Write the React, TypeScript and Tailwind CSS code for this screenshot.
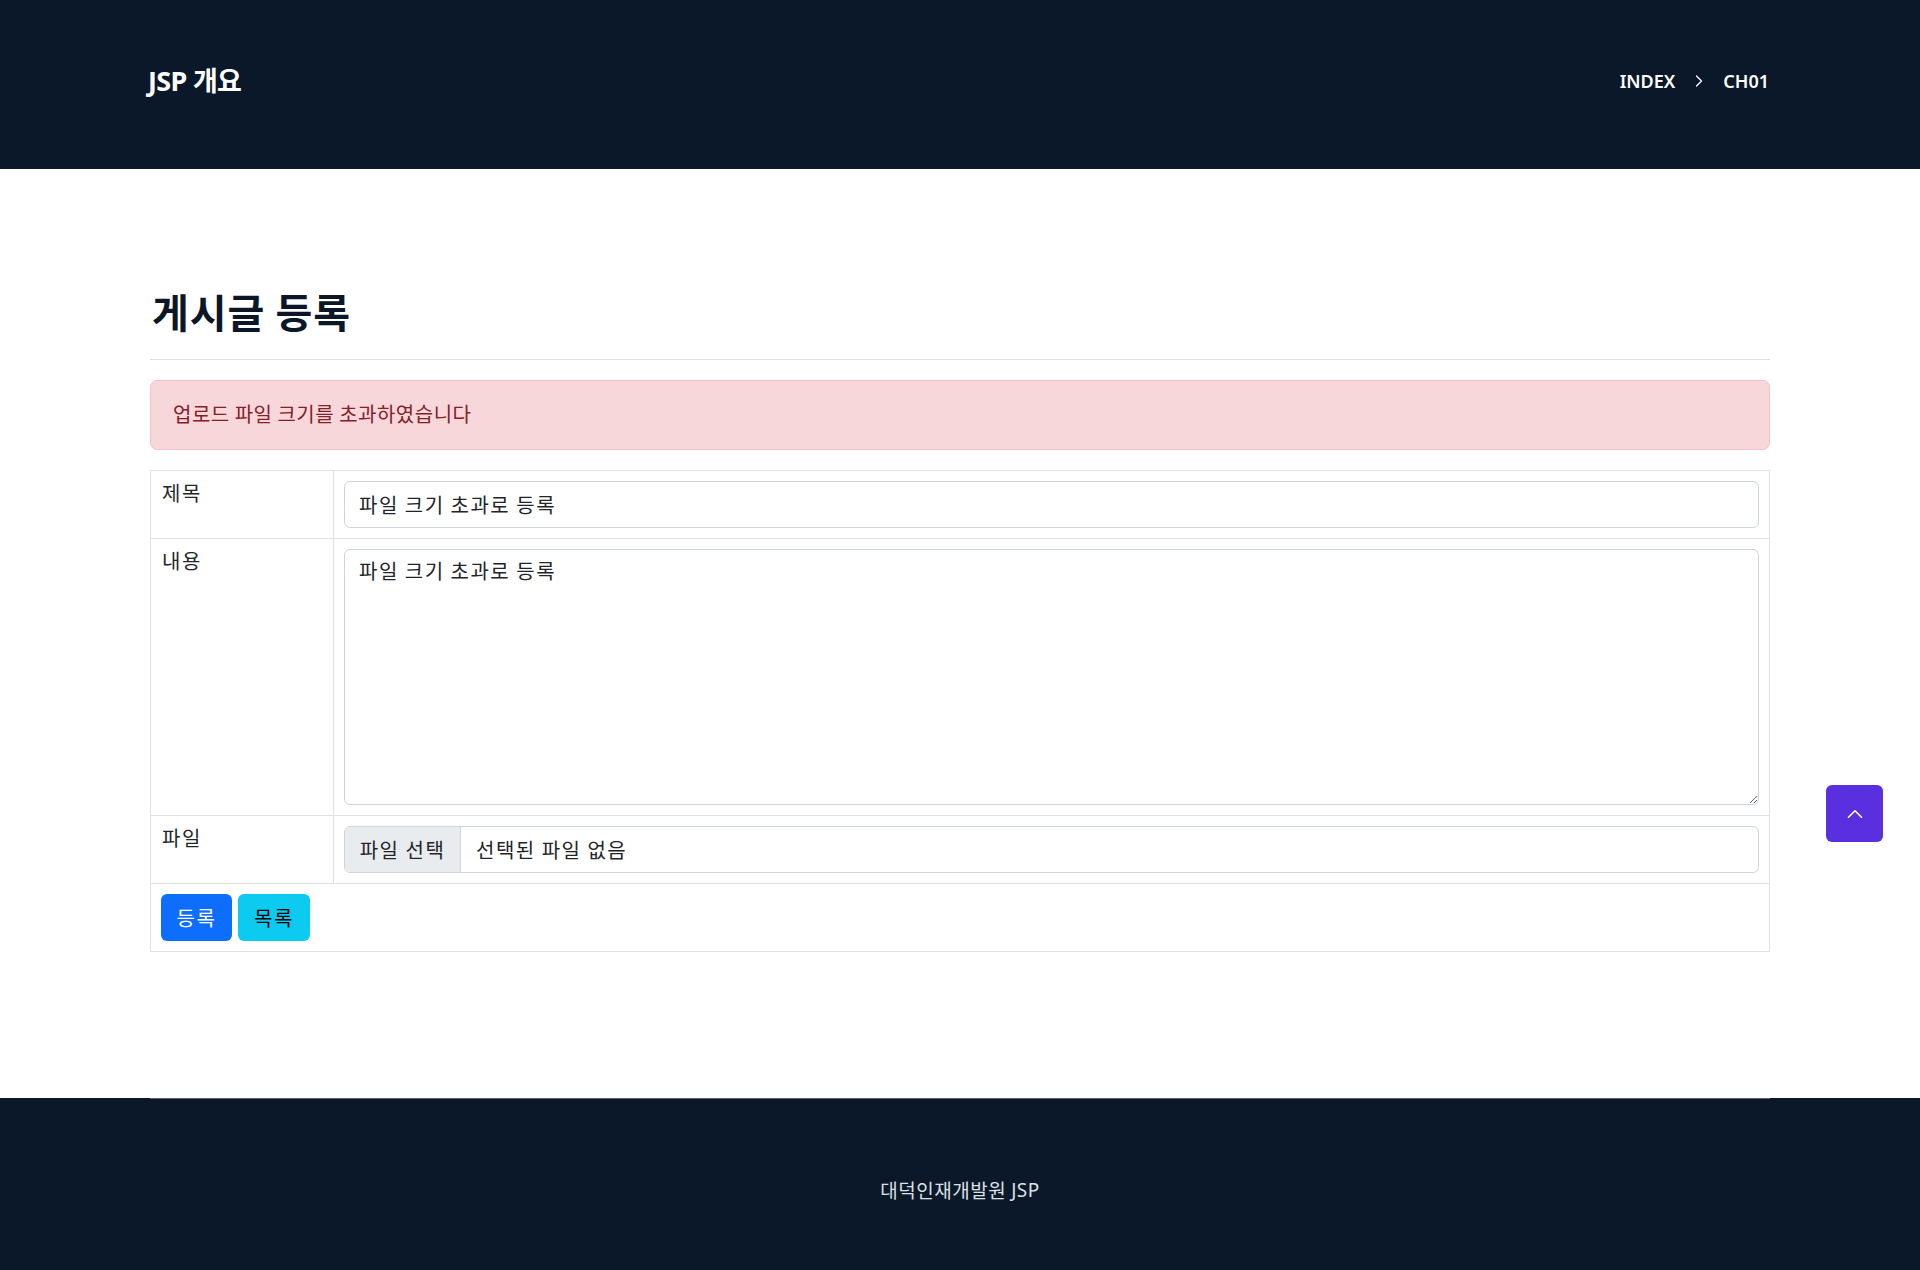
import { ChevronRight, ChevronUp } from "lucide-react";

const kr = { fontFamily: '"Noto Sans CJK KR", "Noto Sans", sans-serif' };
const head = { fontFamily: '"Noto Sans", "Noto Sans CJK KR", sans-serif' };

export default function App() {
  return (
    <div className="relative flex min-h-screen flex-col bg-white text-[#212529]" style={kr}>
      {/* Header */}
      <header className="flex h-[169px] items-center justify-between bg-[#0a1829] pb-[7px] pl-[148px] pr-[151px] text-white">
        <h1 className="text-[27px] font-bold tracking-tight" style={head}>
          JSP 개요
        </h1>
        <nav className="flex items-center gap-[14px] text-[18px] font-semibold" style={head}>
          <span>INDEX</span>
          <ChevronRight className="h-[20px] w-[20px]" strokeWidth={1.5} />
          <span>CH01</span>
        </nav>
      </header>

      {/* Main */}
      <main className="flex-1 px-[150px] pt-[118px]">
        <div className="border-b border-[#e0e0e0] pb-[24px]">
          <h2 className="pl-[2px] text-[40px] leading-[48px] font-bold tracking-[1px] text-[#0b1626]">게시글 등록</h2>
        </div>

        <div className="mt-[20px] flex h-[70px] items-center rounded-[7px] border border-[#f5c2c7] bg-[#f8d7da] px-[22px] pb-[3px] text-[20px] tracking-[0.5px] text-[#842029]">
          업로드 파일 크기를 초과하였습니다
        </div>

        <table className="mt-[20px] w-full border-collapse border border-[#dee2e6] text-[20px] tracking-[1.5px]">
          <tbody>
            <tr>
              <td className="w-[183px] border border-[#dee2e6] p-[10px] pt-[8px] pl-[11px] align-top leading-[28px]">제목</td>
              <td className="border border-[#dee2e6] p-[10px]">
                <input
                  type="text"
                  defaultValue="파일 크기 초과로 등록"
                  className="block h-[47px] w-full rounded-[6px] border border-[#ced4da] px-[14px] text-[20px] tracking-[1.5px] text-[#212529] outline-none"
                />
              </td>
            </tr>
            <tr>
              <td className="border border-[#dee2e6] p-[10px] pt-[8px] pl-[11px] align-top leading-[28px]">내용</td>
              <td className="border border-[#dee2e6] p-[10px]">
                <textarea
                  defaultValue="파일 크기 초과로 등록"
                  className="block h-[256px] w-full rounded-[6px] border border-[#ced4da] px-[14px] py-[7px] text-[20px] leading-[28px] tracking-[1.5px] text-[#212529] outline-none"
                />
              </td>
            </tr>
            <tr>
              <td className="border border-[#dee2e6] p-[10px] pt-[8px] pl-[11px] align-top leading-[28px]">파일</td>
              <td className="border border-[#dee2e6] p-[10px]">
                <div className="flex h-[47px] w-full overflow-hidden rounded-[6px] border border-[#ced4da]">
                  <span className="flex w-[116px] items-center justify-center border-r border-[#ced4da] bg-[#e9ecef]">
                    파일 선택
                  </span>
                  <span className="flex items-center pl-[15px]">선택된 파일 없음</span>
                </div>
              </td>
            </tr>
            <tr>
              <td colSpan={2} className="border border-[#dee2e6] p-[10px]">
                <div className="flex gap-[6px]">
                  <button className="h-[47px] w-[71px] rounded-[6px] bg-[#0d6efd] text-[20px] tracking-[1.5px] text-white">등록</button>
                  <button className="h-[47px] w-[72px] rounded-[6px] bg-[#0dcaf0] text-[20px] tracking-[1.5px] text-black">목록</button>
                </div>
              </td>
            </tr>
          </tbody>
        </table>
      </main>

      {/* Footer */}
      <footer className="h-[172px] bg-[#0a1829] px-[150px]">
        <div className="flex h-full items-center justify-center border-t border-[#5b6068] pt-[12px] text-[19px] tracking-[0.5px] text-[#dde1e6]">
          대덕인재개발원 <span className="ml-[5px]" style={head}>JSP</span>
        </div>
      </footer>

      {/* Scroll to top */}
      <button className="absolute right-[37px] top-[785px] flex h-[57px] w-[57px] items-center justify-center rounded-[6px] bg-[#5a2fe0] text-white">
        <ChevronUp className="h-[26px] w-[26px]" strokeWidth={1.5} />
      </button>
    </div>
  );
}
